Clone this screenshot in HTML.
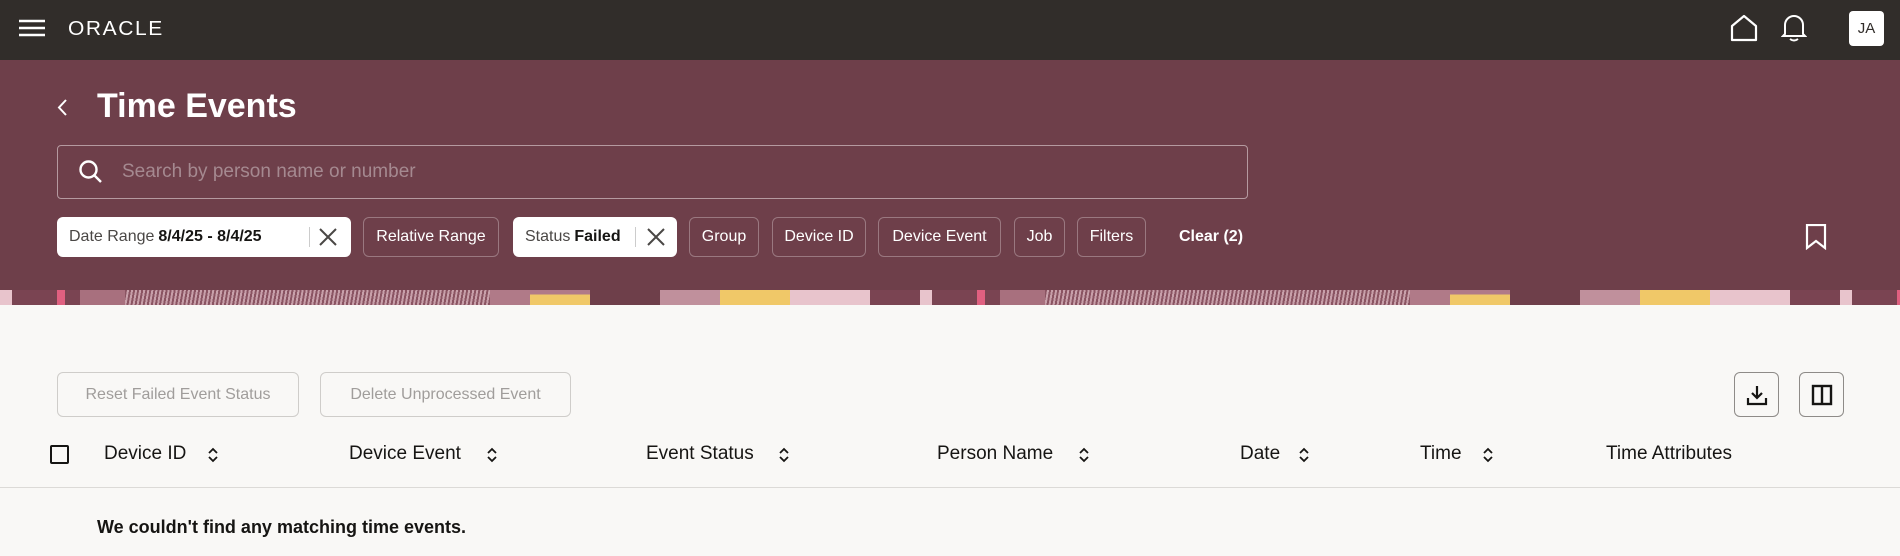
<!DOCTYPE html>
<html><head><meta charset="utf-8"><style>
*{box-sizing:border-box;margin:0;padding:0}
body{width:1900px;height:556px;overflow:hidden;background:#f9f8f6;font-family:"Liberation Sans",sans-serif;position:relative;color:#161513}
.abs{position:absolute}
.top{left:0;top:0;width:1900px;height:60px;background:#312d2a}
.banner{left:0;top:60px;width:1900px;height:230px;background:#6e3f4a}
.strip{left:0;top:290px;width:1900px;height:15px;display:flex;overflow:hidden}
.strip div{height:15px;flex:none}
.chip{top:217px;height:40px;border-radius:6px;font-size:16px;display:flex;align-items:center;white-space:nowrap}
.chip.w{background:#fff;color:#4a4745;padding-left:12px}
.chip.w b{color:#161513;margin-left:4px}
.chip.o{border:1px solid #9a7880;color:#fff;justify-content:center}
.btn{top:372px;height:45px;border:1px solid #cfcdca;border-radius:6px;color:#a09d9b;font-size:16px;display:flex;align-items:center;justify-content:center;background:#f9f8f6}
.ibtn{top:372px;width:45px;height:45px;border:1px solid #8e8b88;border-radius:6px;display:flex;align-items:center;justify-content:center}
.th{top:443px;font-size:19px;color:#161513}
.sort{top:445px}
</style></head><body>
<div class="abs top"></div>
<svg class="abs" style="left:19px;top:19px" width="26" height="18"><g stroke="#fff" stroke-width="2.4"><line x1="0" y1="2" x2="26" y2="2"/><line x1="0" y1="9" x2="26" y2="9"/><line x1="0" y1="16" x2="26" y2="16"/></g></svg>
<div class="abs" style="left:68px;top:18px;color:#fff;font-size:20px;letter-spacing:1.5px;transform:scaleX(1.05);transform-origin:left">ORACLE</div>
<svg class="abs" style="left:1730px;top:14px" width="28" height="28" viewBox="0 0 28 28"><path d="M2 26V12L14 2l12 10v14z" fill="none" stroke="#fff" stroke-width="2.2" stroke-linejoin="round"/></svg>
<svg class="abs" style="left:1781px;top:13px" width="26" height="30" viewBox="0 0 26 30"><path d="M4 21V12a9 9 0 0 1 18 0v9l2 2H2z" fill="none" stroke="#fff" stroke-width="2"/><path d="M9 26q4 3 8 0" fill="none" stroke="#fff" stroke-width="2"/></svg>
<div class="abs" style="left:1849px;top:11px;width:35px;height:35px;background:#fff;border-radius:4px;font-size:15px;color:#312d2a;display:flex;align-items:center;justify-content:center">JA</div>

<div class="abs banner"></div>
<div class="abs strip">
<div style="width:12px;background:#e8c4cc"></div><div style="width:45px;background:#7a4452"></div><div style="width:8px;background:#e06080"></div><div style="width:15px;background:#7a4452"></div><div style="width:45px;background:#a8707e"></div><div style="width:365px;background:repeating-linear-gradient(100deg,#8a5462 0 2px,#c8a0aa 2px 4px)"></div><div style="width:40px;background:#b07a88"></div><div style="width:60px;background:linear-gradient(#b07a88 0 30%,#f0c868 30%)"></div><div style="width:70px;background:#6e3f4a"></div><div style="width:60px;background:#c0909c"></div><div style="width:70px;background:#f0c868"></div><div style="width:80px;background:#e8c4cc"></div><div style="width:50px;background:#7a4452"></div>
<div style="width:12px;background:#e8c4cc"></div><div style="width:45px;background:#7a4452"></div><div style="width:8px;background:#e06080"></div><div style="width:15px;background:#7a4452"></div><div style="width:45px;background:#a8707e"></div><div style="width:365px;background:repeating-linear-gradient(100deg,#8a5462 0 2px,#c8a0aa 2px 4px)"></div><div style="width:40px;background:#b07a88"></div><div style="width:60px;background:linear-gradient(#b07a88 0 30%,#f0c868 30%)"></div><div style="width:70px;background:#6e3f4a"></div><div style="width:60px;background:#c0909c"></div><div style="width:70px;background:#f0c868"></div><div style="width:80px;background:#e8c4cc"></div><div style="width:50px;background:#7a4452"></div>
<div style="width:12px;background:#e8c4cc"></div><div style="width:45px;background:#7a4452"></div><div style="width:8px;background:#e06080"></div><div style="width:100px;background:#7a4452"></div>
</div>

<svg class="abs" style="left:57px;top:99px" width="12" height="17" viewBox="0 0 12 17"><path d="M9 1L2 8.5 9 16" fill="none" stroke="#fff" stroke-width="2"/></svg>
<div class="abs" style="left:97px;top:87px;font-size:34px;font-weight:bold;color:#fff">Time Events</div>
<div class="abs" style="left:57px;top:145px;width:1191px;height:54px;border:1px solid #b59aa0;border-radius:4px"></div>
<svg class="abs" style="left:78px;top:159px" width="26" height="26" viewBox="0 0 26 26"><circle cx="10.5" cy="10.5" r="8" fill="none" stroke="#fff" stroke-width="2.4"/><line x1="16.5" y1="16.5" x2="23" y2="23" stroke="#fff" stroke-width="2.4"/></svg>
<div class="abs" style="left:122px;top:161px;font-size:19px;color:#a58990">Search by person name or number</div>

<div class="abs chip w" style="left:57px;width:294px">Date Range<b>8/4/25 - 8/4/25</b><span style="position:absolute;left:252px;top:10px;width:1px;height:20px;background:#ccc"></span><svg style="position:absolute;left:262px;top:11px" width="18" height="18"><path d="M1 1L17 17M17 1L1 17" stroke="#4a4745" stroke-width="2"/></svg></div>
<div class="abs chip o" style="left:363px;width:136px">Relative Range</div>
<div class="abs chip w" style="left:513px;width:164px">Status<b>Failed</b><span style="position:absolute;left:122px;top:10px;width:1px;height:20px;background:#ccc"></span><svg style="position:absolute;left:134px;top:11px" width="18" height="18"><path d="M1 1L17 17M17 1L1 17" stroke="#4a4745" stroke-width="2"/></svg></div>
<div class="abs chip o" style="left:689px;width:70px">Group</div>
<div class="abs chip o" style="left:772px;width:94px">Device ID</div>
<div class="abs chip o" style="left:878px;width:123px">Device Event</div>
<div class="abs chip o" style="left:1014px;width:51px">Job</div>
<div class="abs chip o" style="left:1077px;width:69px">Filters</div>
<div class="abs chip" style="left:1179px;color:#fff;font-weight:bold">Clear (2)</div>
<svg class="abs" style="left:1805px;top:224px" width="22" height="26" viewBox="0 0 22 26"><path d="M2 1h18v23l-9-7-9 7z" fill="none" stroke="#fff" stroke-width="2.2"/></svg>

<div class="abs btn" style="left:57px;width:242px">Reset Failed Event Status</div>
<div class="abs btn" style="left:320px;width:251px">Delete Unprocessed Event</div>
<div class="abs ibtn" style="left:1734px"><svg width="22" height="22" viewBox="0 0 22 22"><path d="M11 2v12M6 9l5 5 5-5M2 14v6h18v-6" fill="none" stroke="#161513" stroke-width="2.2"/></svg></div>
<div class="abs ibtn" style="left:1799px"><svg width="22" height="22" viewBox="0 0 22 22"><rect x="2" y="2" width="18" height="18" fill="none" stroke="#161513" stroke-width="2.4"/><line x1="11" y1="2" x2="11" y2="20" stroke="#161513" stroke-width="2.4"/></svg></div>

<div class="abs" style="left:50px;top:445px;width:19px;height:19px;border:2px solid #161513;border-radius:2px"></div>
<div class="abs th" style="left:104px">Device ID</div>
<div class="abs th" style="left:349px">Device Event</div>
<div class="abs th" style="left:646px">Event Status</div>
<div class="abs th" style="left:937px">Person Name</div>
<div class="abs th" style="left:1240px">Date</div>
<div class="abs th" style="left:1420px">Time</div>
<div class="abs th" style="left:1606px">Time Attributes</div>
<svg class="abs sort" style="left:206px" width="14" height="20"><path d="M3 8l4-4 4 4M3 12l4 4 4-4" fill="none" stroke="#161513" stroke-width="1.8"/></svg>
<svg class="abs sort" style="left:485px" width="14" height="20"><path d="M3 8l4-4 4 4M3 12l4 4 4-4" fill="none" stroke="#161513" stroke-width="1.8"/></svg>
<svg class="abs sort" style="left:777px" width="14" height="20"><path d="M3 8l4-4 4 4M3 12l4 4 4-4" fill="none" stroke="#161513" stroke-width="1.8"/></svg>
<svg class="abs sort" style="left:1077px" width="14" height="20"><path d="M3 8l4-4 4 4M3 12l4 4 4-4" fill="none" stroke="#161513" stroke-width="1.8"/></svg>
<svg class="abs sort" style="left:1297px" width="14" height="20"><path d="M3 8l4-4 4 4M3 12l4 4 4-4" fill="none" stroke="#161513" stroke-width="1.8"/></svg>
<svg class="abs sort" style="left:1481px" width="14" height="20"><path d="M3 8l4-4 4 4M3 12l4 4 4-4" fill="none" stroke="#161513" stroke-width="1.8"/></svg>
<div class="abs" style="left:0;top:487px;width:1900px;height:1px;background:#dcdad7"></div>
<div class="abs" style="left:97px;top:517px;font-size:18px;font-weight:bold">We couldn't find any matching time events.</div>
</body></html>
